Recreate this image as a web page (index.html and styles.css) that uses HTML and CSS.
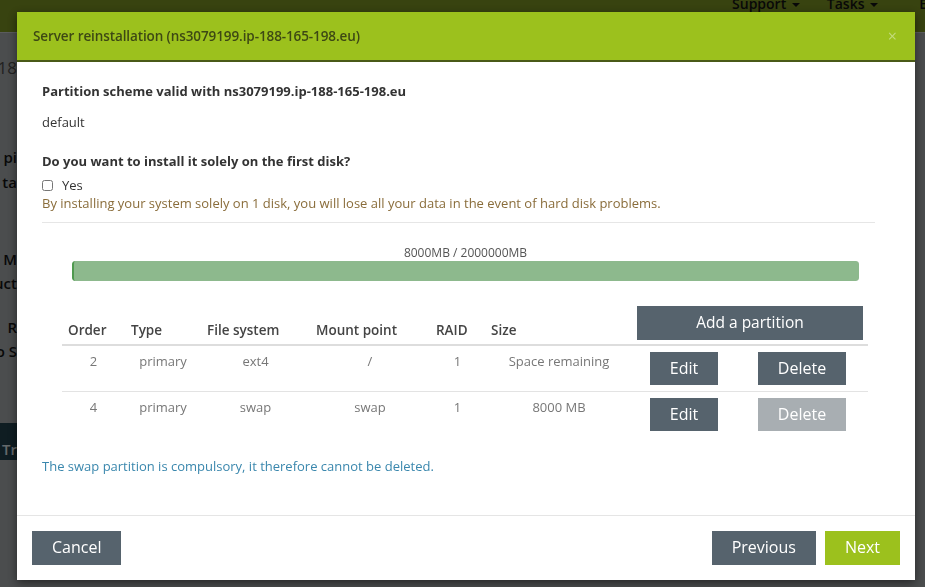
FILE: index.html
```html
<!DOCTYPE html>
<html lang="en">
<head>
    <meta charset="UTF-8">
    <title>Server reinstallation</title>
    <link rel="stylesheet" href="styles.css">
</head>
<body>
    <div class="page">
        <div class="topbar">
            <span class="navItem">Support <i class="caret"></i></span>
            <span class="navItem">Tasks <i class="caret"></i></span>
            <span class="navItem last">E</span>
        </div>
        <div class="pageBody">
            <p class="frag f1">18</p>
            <p class="frag f2">pi</p>
            <p class="frag f3">ta</p>
            <p class="frag f4">M</p>
            <p class="frag f5">uct</p>
            <p class="frag f6">R</p>
            <p class="frag f7">o S</p>
            <p class="frag f8">Tr</p>
        </div>
    </div>
    <div class="backdrop"></div>

    <div class="modal">
        <div class="mHead">
            <h4>Server reinstallation (ns3079199.ip-188-165-198.eu)</h4>
            <span class="close">&times;</span>
        </div>
        <div class="mBody">
            <p class="label">Partition scheme valid with ns3079199.ip-188-165-198.eu</p>
            <p class="scheme">default</p>
            <p class="label">Do you want to install it solely on the first disk?</p>
            <label class="check"><input type="checkbox"> Yes</label>
            <p class="warn">By installing your system solely on 1 disk, you will lose all your data in the event of hard disk problems.</p>
            <hr>
            <div class="usage">
                <p class="usageText">8000MB / 2000000MB</p>
                <div class="bar"><div class="fill" style="width: 100%"></div></div>
            </div>
            <table class="parts">
                <thead>
                    <tr>
                        <th class="cOrder">Order</th>
                        <th class="cType">Type</th>
                        <th class="cFs">File system</th>
                        <th class="cMount">Mount point</th>
                        <th class="cRaid">RAID</th>
                        <th class="cSize">Size</th>
                        <th colspan="2" class="cAdd"><span class="btn wide">Add a partition</span></th>
                    </tr>
                </thead>
                <tbody>
                    <tr>
                        <td>2</td>
                        <td>primary</td>
                        <td>ext4</td>
                        <td>/</td>
                        <td>1</td>
                        <td>Space remaining</td>
                        <td class="cEdit"><span class="btn">Edit</span></td>
                        <td class="cDel"><span class="btn del">Delete</span></td>
                    </tr>
                    <tr>
                        <td>4</td>
                        <td>primary</td>
                        <td>swap</td>
                        <td>swap</td>
                        <td>1</td>
                        <td>8000 MB</td>
                        <td class="cEdit"><span class="btn">Edit</span></td>
                        <td class="cDel"><span class="btn del disabled">Delete</span></td>
                    </tr>
                </tbody>
            </table>
            <p class="info">The swap partition is compulsory, it therefore cannot be deleted.</p>
        </div>
        <div class="mFoot">
            <span class="btn">Cancel</span>
            <div class="right">
                <span class="btn">Previous</span>
                <span class="btn green">Next</span>
            </div>
        </div>
    </div>
</body>
</html>
```

FILE: styles.css
```css
* {
    margin: 0;
    padding: 0;
    box-sizing: border-box;
}

body {
    width: 925px;
    height: 587px;
    overflow: hidden;
    font-family: "Open Sans", "Liberation Sans", sans-serif;
    font-size: 13px;
    color: #333;
    background: #969a9c;
}

/* page behind the dialog */
.page {
    height: 587px;
}
.topbar {
    height: 32px;
    background: #708620;
    display: flex;
    justify-content: flex-end;
    color: #111;
    font-size: 14px;
    font-weight: 600;
}
.navItem {
    line-height: 12px;
    margin-top: -2px;
    margin-right: 27px;
    white-space: nowrap;
}
.navItem.last {
    margin-right: -2px;
    margin-left: 14px;
}
.caret {
    display: inline-block;
    border-top: 4px solid #111;
    border-left: 4px solid transparent;
    border-right: 4px solid transparent;
    vertical-align: middle;
    margin-left: 2px;
}
.pageBody {
    position: relative;
    height: 555px;
    background: #969a9c;
    border-top: 1px solid #b5b8ba;
}
.frag {
    position: absolute;
    right: 908px;
    font-size: 15px;
    font-weight: 600;
    color: #111;
    white-space: nowrap;
    line-height: 18px;
}
.f1 { top: 26px; font-weight: 400; color: #444; font-size: 17px; }
.f2 { top: 115px; }
.f3 { top: 140px; }
.f4 { top: 217px; }
.f5 { top: 241px; }
.f6 { top: 285px; }
.f7 { top: 309px; }
.f8 { top: 390px; color: #c9d2d6; background: #1e3a44; padding: 17px 0 2px 20px; }

.backdrop {
    position: fixed;
    left: 0;
    top: 0;
    right: 0;
    bottom: 0;
    background: rgba(0, 0, 0, 0.5);
}

/* dialog */
.modal {
    position: fixed;
    left: 17px;
    top: 12px;
    width: 898px;
    background: #fff;
    box-shadow: 0 3px 9px rgba(0, 0, 0, 0.5);
}
.mHead {
    height: 50px;
    background: #9cc11d;
    border-bottom: 2px solid #4a5a18;
    display: flex;
    align-items: center;
    justify-content: space-between;
    padding: 0 16px;
}
.mHead h4 {
    font-size: 13.5px;
    font-weight: 600;
    color: #3d4814;
    letter-spacing: -0.1px;
}
.close {
    color: #c3db7c;
    font-size: 16px;
    margin-right: 2px;
}

.mBody {
    padding: 20px 40px 40px 25px;
}
.label {
    font-weight: 700;
    font-size: 13px;
    line-height: 18px;
}
.scheme {
    margin: 13px 0 21px;
    line-height: 18px;
}
.check {
    display: flex;
    align-items: center;
    gap: 9px;
    margin-top: 6px;
    line-height: 18px;
}
.check input {
    width: 11px;
    height: 11px;
    margin: 0;
}
.warn {
    color: #8a6d3b;
    line-height: 18px;
}
hr {
    border: 0;
    border-top: 1px solid #e6e6e6;
    margin: 10px 0 0;
}

.usage {
    padding: 22px 16px 0 30px;
}
.usageText {
    text-align: center;
    font-size: 12px;
    color: #555;
    line-height: 16px;
}
.bar {
    height: 20px;
    background: #f5f5f5;
    border-radius: 3px;
    box-shadow: inset 0 1px 2px rgba(0, 0, 0, 0.1);
    overflow: hidden;
}
.fill {
    height: 100%;
    background: #8db98d;
    border-left: 2px solid #4f9a4f;
    border-radius: 3px;
}

.parts {
    margin: 25px 0 0 20px;
    width: 806px;
    border-collapse: collapse;
}
.parts th {
    text-align: left;
    font-weight: 600;
    font-size: 13.5px;
    line-height: 18px;
    color: #444;
    padding: 0 6px 5px;
    vertical-align: bottom;
    border-bottom: 2px solid #ddd;
}
.parts td {
    text-align: center;
    vertical-align: top;
    color: #777;
    font-size: 13px;
    line-height: 18px;
    padding: 6px 0;
    border-top: 1px solid #e3e3e3;
}
.parts tbody tr:first-child td {
    border-top: 0;
}
.cOrder { width: 63px; }
.cType { width: 76px; }
.cFs { width: 109px; }
.cMount { width: 120px; }
.cRaid { width: 55px; }
.cSize { width: 148px; }
.parts th.cAdd {
    padding: 0 5px 4px 4px;
    text-align: center;
}
.parts td.cEdit {
    width: 102px;
    padding-left: 17px;
    text-align: left;
}
.parts td.cDel {
    padding-left: 23px;
    text-align: left;
}

.btn {
    display: inline-block;
    background: #56636d;
    color: #fff;
    font-size: 16px;
    font-weight: 400;
    line-height: 33px;
    height: 34px;
    padding: 0 20px;
    text-align: center;
    cursor: pointer;
}
.parts .btn {
    width: 68px;
    height: 33px;
    padding: 0;
    vertical-align: top;
}
.parts .btn.del {
    width: 88px;
}
.parts .btn.wide {
    display: block;
    width: auto;
    height: 34px;
    font-size: 15.5px;
}
.btn.disabled {
    background: #a8aeb2;
}
.btn.green {
    background: #9cc11d;
}

.info {
    margin-top: 20px;
    color: #3a87ad;
    font-size: 13px;
    line-height: 18px;
}

.mFoot {
    border-top: 1px solid #e5e5e5;
    padding: 15px;
    display: flex;
    justify-content: space-between;
}
.mFoot .right {
    display: flex;
    gap: 9px;
}
```
